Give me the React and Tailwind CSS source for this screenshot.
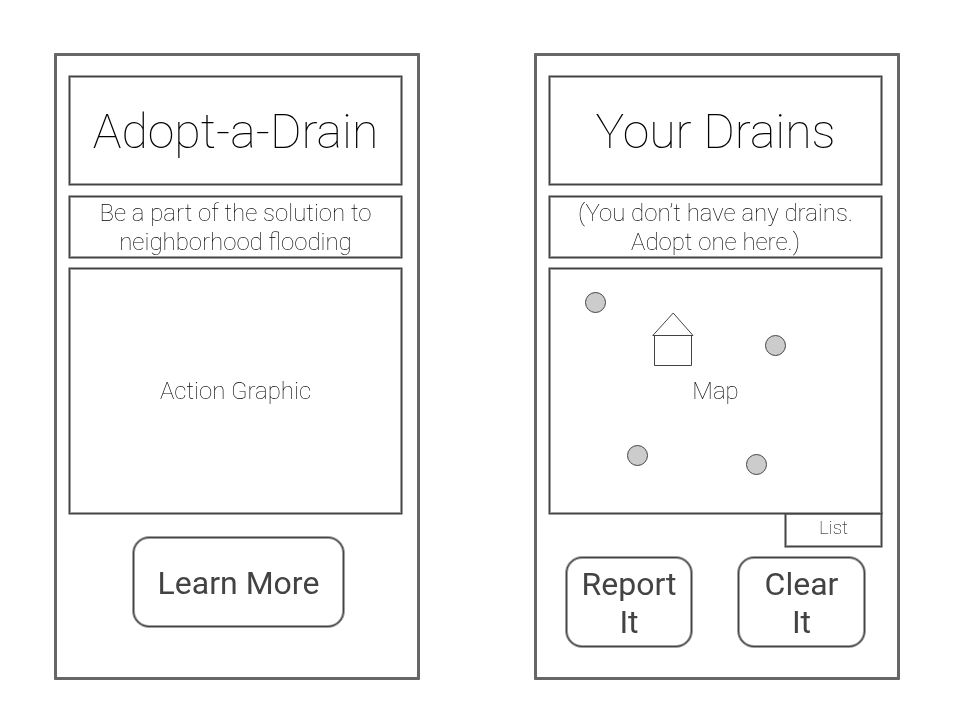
import React from 'react';

// Thin outline with a softer edge on both sides.
const outline = 'border border-[#434343]/50 shadow-[inset_0_0_0_1px_#434343,inset_0_0_0_2px_#a1a1a1]';

function Screen({ title, note, children }) {
  return (
    <section className="flex h-[627px] w-[366px] flex-col rounded-[1px] border-[3px] border-[#666666] px-[11px] pt-[19px]">
      <header className={`flex h-[111px] w-[335px] items-center justify-center rounded-[1px] pt-[4px] text-[48.2px] font-thin text-black ${outline}`}>
        <h1 className="whitespace-nowrap">{title}</h1>
      </header>
      <div className={`mt-[9px] h-[64px] w-[335px] rounded-[1px] pt-[3px] text-center text-2xl leading-[29px] font-thin text-black ${outline}`}>
        {note.map((line) => (
          <p key={line} className="whitespace-nowrap">{line}</p>
        ))}
      </div>
      {children}
    </section>
  );
}

function Pin({ place }) {
  return <span className={`absolute size-[21px] rounded-full border border-[#434343] bg-[#cccccc] ${place}`} />;
}

function House() {
  return (
    <svg className="absolute top-[43px] left-[101px]" width="44" height="56" viewBox="0 0 44 56" fill="none" stroke="#434343" strokeWidth="1">
      <path d="M2.8 24.5 23.2 2 43 24.5Z" />
      <path d="M4.5 24.5H41.5V54.5H4.5Z" />
    </svg>
  );
}

const button = `flex h-[92px] items-center justify-center rounded-[17px] text-center text-[32px] leading-[38px] font-normal text-[#434343] pt-[2px] ${outline}`;

export default function App() {
  return (
    <div className="bg-white">
      <main className="flex h-[720px] w-[960px] gap-[114px] overflow-hidden pt-[53px] pl-[54px] font-['Roboto',sans-serif] antialiased will-change-transform">
        <Screen title="Adopt-a-Drain" note={['Be a part of the solution to', 'neighborhood flooding']}>
          <div className={`mt-[8px] flex h-[248px] w-[335px] items-center justify-center rounded-[1px] text-2xl font-thin text-black ${outline}`}>
            Action Graphic
          </div>
          <button className={`${button} mt-[21px] ml-[64px] w-[213px]`}>Learn More</button>
        </Screen>
        <Screen title="Your Drains" note={['(You don’t have any drains.', 'Adopt one here.)']}>
          <div className={`relative mt-[8px] flex h-[248px] w-[335px] shrink-0 items-center justify-center rounded-[1px] text-2xl font-thin text-black ${outline}`}>
            Map
            <Pin place="top-[24px] left-[36px]" />
            <Pin place="top-[67px] left-[216px]" />
            <Pin place="top-[177px] left-[78px]" />
            <Pin place="top-[186px] left-[197px]" />
            <House />
          </div>
          <div className={`-mt-[3px] ml-[236px] flex h-[36px] w-[99px] shrink-0 items-center justify-center rounded-[1px] pb-[3px] text-[19px] font-thin text-black ${outline}`}>
            List
          </div>
          <div className="mt-[8px] ml-[17px] flex gap-[44px]">
            <button className={`${button} w-[128px]`}>Report<br />It</button>
            <button className={`${button} w-[129px]`}>Clear<br />It</button>
          </div>
        </Screen>
      </main>
    </div>
  );
}
